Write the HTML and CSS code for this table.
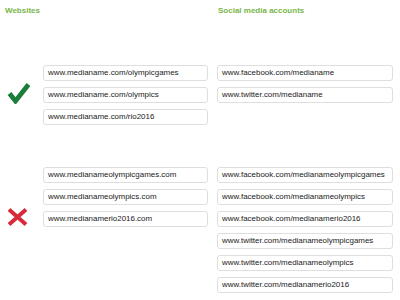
FILE: index.html
```html
<!DOCTYPE html>
<html>
<head>
<meta charset="utf-8">
<link rel="stylesheet" href="styles.css">
</head>
<body>
<div class="page">
  <div class="heads">
    <div class="head head-sites">Websites</div>
    <div class="head">Social media accounts</div>
  </div>

  <div class="group group-ok">
    <div class="icon icon-ok">
      <svg width="24" height="22" viewBox="0 0 24 22"><path d="M2.5 11.5 L8.5 19 L21.5 2.5" fill="none" stroke="#1b7d3a" stroke-width="4.8" stroke-linejoin="miter"/></svg>
    </div>
    <div class="list">
      <div class="box">www.medianame.com/olympicgames</div>
      <div class="box">www.medianame.com/olympics</div>
      <div class="box">www.medianame.com/rio2016</div>
    </div>
    <div class="list list-wide">
      <div class="box">www.facebook.com/medianame</div>
      <div class="box">www.twitter.com/medianame</div>
    </div>
  </div>

  <div class="group group-bad">
    <div class="icon icon-bad">
      <svg width="21" height="18" viewBox="0 0 21 18"><path d="M2 1.5 L19 16.5 M19 1.5 L2 16.5" fill="none" stroke="#d72a3c" stroke-width="4"/></svg>
    </div>
    <div class="list">
      <div class="box">www.medianameolympicgames.com</div>
      <div class="box">www.medianameolympics.com</div>
      <div class="box">www.medianamerio2016.com</div>
    </div>
    <div class="list list-wide">
      <div class="box">www.facebook.com/medianameolympicgames</div>
      <div class="box">www.facebook.com/medianameolympics</div>
      <div class="box">www.facebook.com/medianamerio2016</div>
      <div class="box">www.twitter.com/medianameolympicgames</div>
      <div class="box">www.twitter.com/medianameolympics</div>
      <div class="box">www.twitter.com/medianamerio2016</div>
    </div>
  </div>
</div>
</body>
</html>
```

FILE: styles.css
```css
html, body {
  margin: 0;
  padding: 0;
  background: #ffffff;
}

.page {
  padding: 6px 7px 0 5px;
  font-family: "Liberation Sans", Arial, sans-serif;
}

.heads {
  display: flex;
  height: 10px;
}

.head {
  font-size: 8px;
  line-height: 10px;
  font-weight: bold;
  color: #79b64a;
}

.head-sites {
  width: 213px;
}

.group {
  display: grid;
  grid-template-columns: 29px 165px 176px;
  column-gap: 9px;
  align-items: start;
}

.group-ok {
  margin-top: 49px;
}

.group-bad {
  margin-top: 42px;
}

.list {
  display: flex;
  flex-direction: column;
  gap: 6px;
}

.box {
  box-sizing: border-box;
  height: 16px;
  border: 1px solid #dedede;
  border-radius: 3px;
  background: #fff;
  padding: 0 4px;
  font-size: 7.95px;
  line-height: 14px;
  color: #222;
  white-space: nowrap;
  overflow: hidden;
}

.icon svg {
  display: block;
}

.icon-ok {
  margin-top: 17px;
  margin-left: 2px;
}

.icon-bad {
  margin-top: 41px;
  margin-left: 2px;
}
```
